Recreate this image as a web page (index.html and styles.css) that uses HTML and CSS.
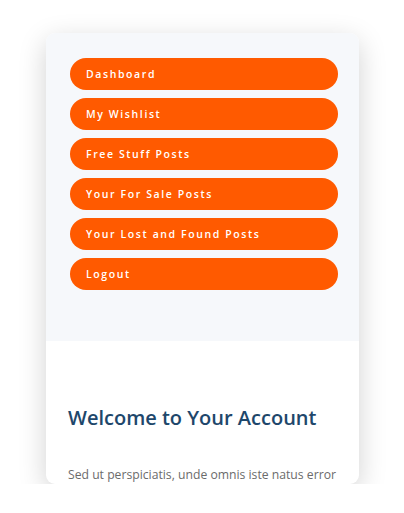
FILE: index.html
```html
<!DOCTYPE html>
<html lang="en">

<head>
    <meta charset="UTF-8">
    <meta name="viewport" content="width=device-width, initial-scale=1.0">
    <title>My Account</title>
    <link rel="stylesheet" href="styles.css">
</head>

<body>
    <div class="card">
        <!-- Account menu -->
        <nav class="menu">
            <a class="menu-btn" href="#">Dashboard</a>
            <a class="menu-btn" href="#">My Wishlist</a>
            <a class="menu-btn" href="#">Free Stuff Posts</a>
            <a class="menu-btn" href="#">Your For Sale Posts</a>
            <a class="menu-btn" href="#">Your Lost and Found Posts</a>
            <a class="menu-btn" href="#">Logout</a>
        </nav>
        <div class="content">
            <h2>Welcome to Your Account</h2>
            <p>Sed ut perspiciatis, unde omnis iste natus error</p>
        </div>
    </div>
</body>

</html>
```
FILE: styles.css
```css
body {
    margin: 0;
    background-color: #ffffff;
    font-family: "Open Sans", "Liberation Sans", sans-serif;
}

.card {
    width: 313px;
    height: 451px;
    margin: 33px 0 0 46px;
    border-radius: 9px;
    overflow: hidden;
    background-color: #ffffff;
    box-shadow: 0 8px 28px rgba(0, 0, 0, 0.18);
}

.menu {
    display: flex;
    flex-direction: column;
    gap: 8px;
    padding: 25px 0 51px 24px;
    background-color: #f6f8fb;
}

.menu-btn {
    display: flex;
    align-items: center;
    width: 268px;
    height: 32px;
    box-sizing: border-box;
    padding-left: 16px;
    border-radius: 16px;
    background-color: #ff5a00;
    color: #ffffff;
    font-size: 10.5px;
    font-weight: 600;
    letter-spacing: 1.6px;
    text-decoration: none;
}

.content {
    padding: 63px 22px 0 22px;
}

h2 {
    margin: 0;
    color: #1e476b;
    font-size: 20px;
    font-weight: 600;
}

p {
    margin: 34px 0 0 0;
    color: #6b6b6b;
    font-size: 12.2px;
    line-height: 20px;
    white-space: nowrap;
}
```
